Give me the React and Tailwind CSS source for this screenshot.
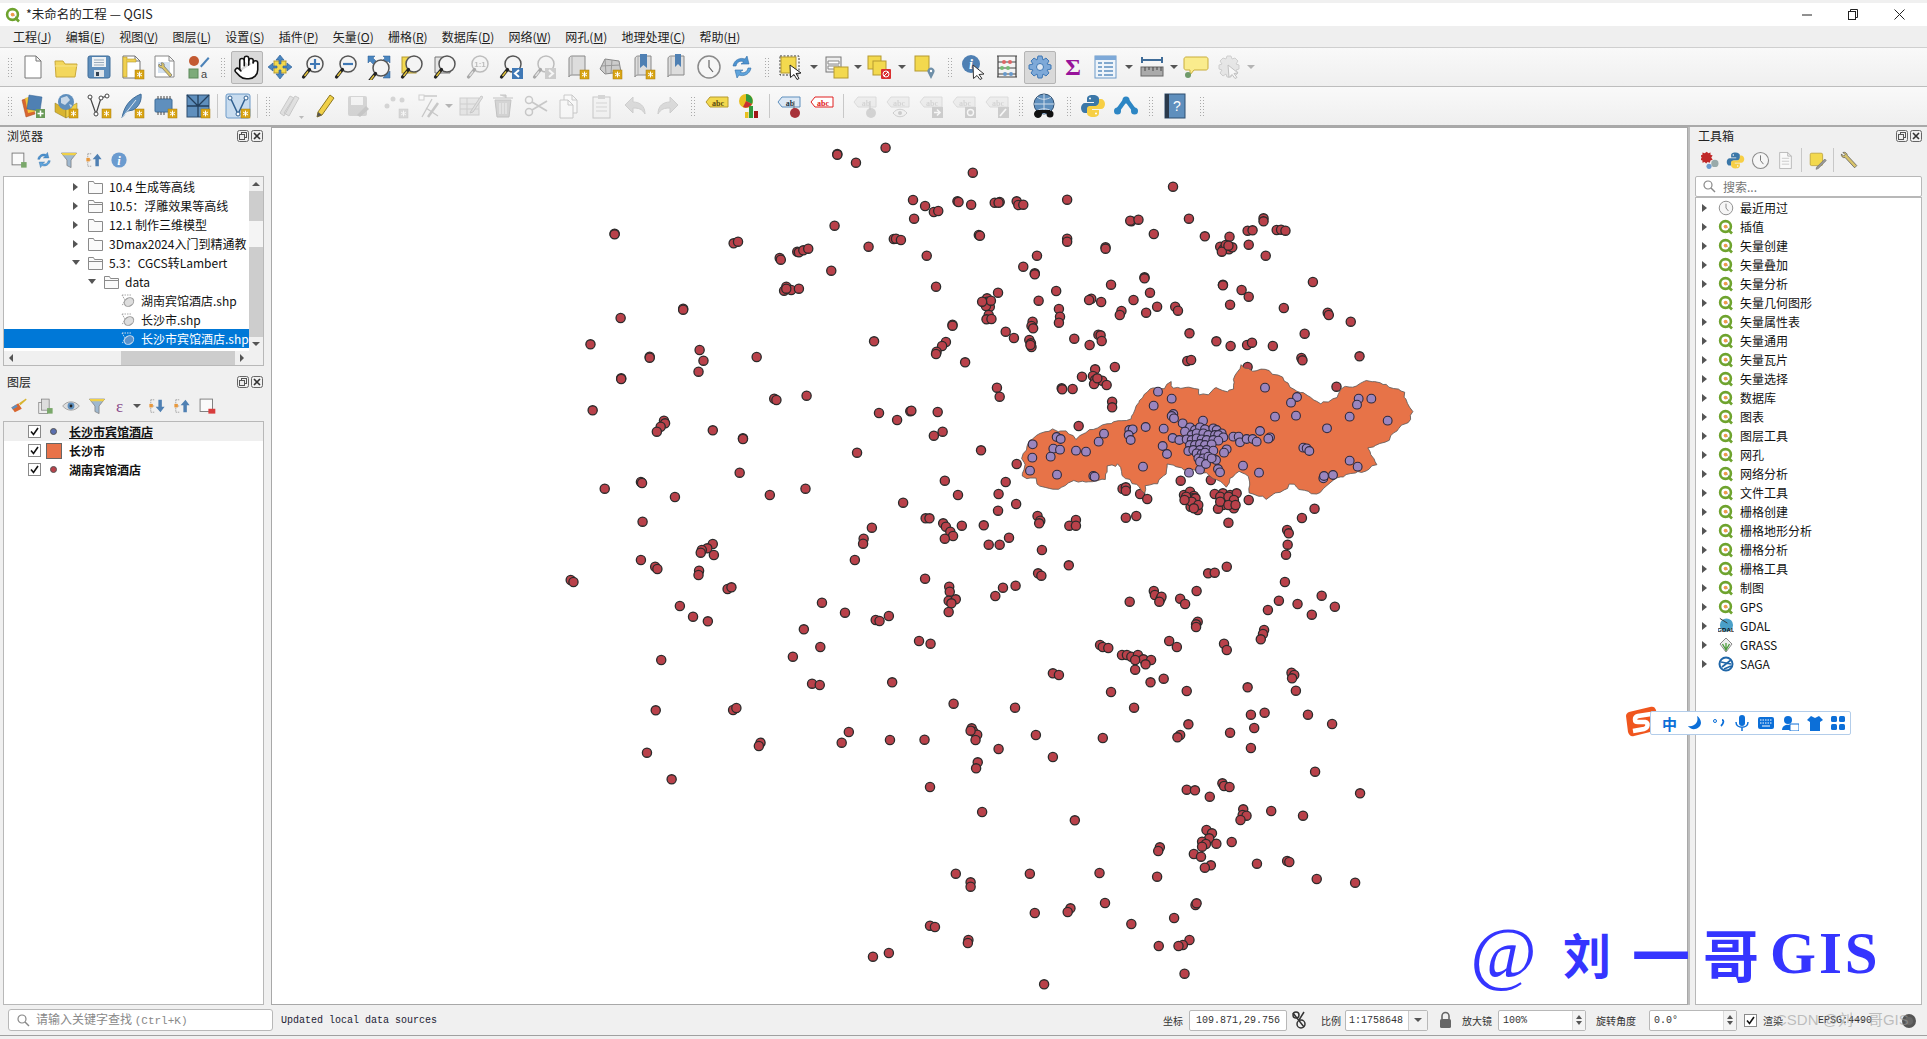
import React from "react";
import { Hand } from "lucide-react";

const Sv = ({ children, s = 26 }) => (
  <svg width={s} height={s} viewBox="0 0 26 26" fill="none" className="block">{children}</svg>
);
const Badge = () => (
  <g>
    <rect x="16" y="16" width="9" height="9" fill="#d9a514" stroke="#a87d10" strokeWidth=".5" />
    <path d="M20.5 17.6v5.8M18 19l5 3M23 19l-5 3" stroke="#fff" strokeWidth="1" />
  </g>
);
const Mag = ({ children }) => (
  <>
    <circle cx="15" cy="10" r="8" fill="#f4f4f4" stroke="#555" strokeWidth="1.5" />
    {children}
    <path d="M9.5 15.5 3.5 23" stroke="#222" strokeWidth="3.2" strokeLinecap="round" />
    <path d="M8 17.5 4.5 22" stroke="#e8c83c" strokeWidth="1.4" />
  </>
);
const Doc = ({ x = 5, y = 2, w = 16, h = 22, f = "#fff", st = "#777" }) => (
  <path d={`M${x} ${y}h${w - 5}l5 5v${h - 5}h-${w}z M${x + w - 5} ${y}v5h5`} fill={f} stroke={st} strokeWidth="1" />
);
const Roll = ({ children }) => (
  <>
    <path d="M5 5c0-3 3-3 3-3h13v19H8c-2 0-3 1-3 2z" fill="#ddd" stroke="#888" />
    <path d="M8 2v19" stroke="#aaa" />
    {children}
  </>
);
const Tag = ({ f = "#ddd", st = "#aaa", t = "abc", c = "#999" }) => (
  <>
    <path d="M2 9l4-5h18v10H6z" fill={f} stroke={st} />
    <text x="14" y="12.5" fontSize="8" textAnchor="middle" fontWeight="700" fontFamily="Liberation Serif" fill={c}>{t}</text>
  </>
);
const Arrows = () => (
  <path d="M13 1l4 5h-3v4h-2V6H9zM13 25l4-5h-3v-4h-2v4H9zM1 13l5-4v3h4v2H6v3zM25 13l-5-4v3h-4v2h4v3z" fill="#4a86c0" stroke="#2a5a90" strokeWidth=".6" />
);
const Refresh = ({ s = 26 }) => (
  <Sv s={s}>
    <path d="M4 12C5 6 11 3 16 5l2-3 2 8-8 0 3-2c-4-2-7 0-8 4z" fill="#4d93d0" stroke="#2f6da8" strokeWidth=".6" />
    <path d="M22 14c-1 6-7 9-12 7l-2 3-2-8 8 0-3 2c4 2 7 0 8-4z" fill="#5fa4dc" stroke="#2f6da8" strokeWidth=".6" />
  </Sv>
);
const Clock = ({ s = 26 }) => (
  <Sv s={s}>
    <circle cx="13" cy="13" r="11" fill="#f6f6f6" stroke="#8a8a8a" strokeWidth="1.5" />
    <path d="M13 6v7l4 5" stroke="#666" strokeWidth="1.2" />
  </Sv>
);
const Python = ({ s = 26 }) => (
  <Sv s={s}>
    <path d="M13 2c-5 0-6 2-6 4v3h7v1H5c-2 0-4 2-4 5s2 5 4 5h2v-3c0-2 2-4 4-4h5c2 0 3-1 3-3V6c0-2-2-4-6-4z" fill="#3b77a8" />
    <path d="M13 24c5 0 6-2 6-4v-3h-7v-1h9c2 0 4-2 4-5s-2-5-4-5h-2v3c0 2-2 4-4 4h-5c-2 0-3 1-3 3v4c0 2 2 4 6 4z" fill="#f7cf45" />
    <circle cx="10" cy="5.5" r="1" fill="#fff" />
    <circle cx="16" cy="20.5" r="1" fill="#fff" />
  </Sv>
);
const Q = ({ s = 16 }) => (
  <svg width={s} height={s} viewBox="0 0 16 16" fill="none" className="block">
    <circle cx="7.5" cy="7.5" r="5.4" fill="#fff" stroke="#6ea32e" strokeWidth="2.6" />
    <circle cx="7.6" cy="7.6" r="1.9" fill="#ee9a4d" />
    <path d="M10 10.5l4 4" stroke="#6ea32e" strokeWidth="2.6" />
    <path d="M9 8l2 2" stroke="#bbb" strokeWidth="1" />
  </svg>
);

const Btn = ({ children, active, dim, w = "w-[33px]" }) => (
  <div className={`${w} h-[33px] shrink-0 flex items-center justify-center`}>
    <div className={`${active ? "w-[32px] h-[33px] bg-[#d9d9d9] border border-[#b5b5b5] rounded-[2px]" : ""} flex items-center justify-center ${dim ? "opacity-35 grayscale" : ""}`}>
      {children}
    </div>
  </div>
);
const Dots = ({ w = "w-[16px]" }) => (
  <div className={`${w} shrink-0 flex justify-center`}>
    <div className="w-[5px] h-[21px] bg-[radial-gradient(circle,#aaa_0.6px,transparent_0.9px)] bg-[length:3px_3px]" />
  </div>
);
const Sep = ({ w = "w-[7px]" }) => (
  <div className={`${w} shrink-0 flex justify-center`}><div className="w-px h-[24px] bg-[#c8c8c8]" /></div>
);
const Caret = ({ w = "w-[12px]", dim }) => (
  <div className={`${w} shrink-0 flex justify-center ${dim ? "opacity-40" : ""}`}>
    <div className="w-0 h-0 border-x-[4px] border-x-transparent border-t-[4px] border-t-[#555]" />
  </div>
);

const TB1 = () => (
  <div className="h-[39px] shrink-0 flex items-center pl-[3px] bg-gradient-to-b from-[#f9f9f9] to-[#efefef] border-b border-[#bdbdbd]">
    <Dots w="w-[13px]" />
    <Btn><Sv><Doc x={5} y={2} w={16} h={22} /></Sv></Btn>
    <Btn><Sv><path d="M2 7h8l2 3h12l-2 13H3z" fill="#f3d75c" stroke="#c9a83a" /><path d="M2 12h22" stroke="#f8e48a" /></Sv></Btn>
    <Btn><Sv><rect x="2" y="2" width="22" height="22" rx="2" fill="#5f8fbd" stroke="#3f6c98" /><rect x="6" y="3" width="14" height="10" fill="#eef2f5" /><path d="M8 6h10M8 8.5h10M8 11h10" stroke="#9ab" /><rect x="8" y="16" width="10" height="7" fill="#dfe5ea" /><rect x="10" y="18" width="3" height="4" fill="#345" /></Sv></Btn>
    <Btn><Sv><Doc x={4} y={2} w={17} h={22} /><rect x="4" y="3" width="4" height="20" fill="#f0d050" stroke="#b59a30" strokeWidth=".6" /><path d="M8 5h9v3H8" fill="#f0d050" stroke="#b59a30" strokeWidth=".6" /><Badge /></Sv></Btn>
    <Btn><Sv><Doc x={3} y={2} w={19} h={21} st="#888" /><rect x="6" y="8" width="12" height="11" fill="#d5e2f0" /><path d="M9 9c2-1 4 1 3 3l8 9-2 2-8-9c-3 0-4-2-3-4l2 2 1-1z" fill="#d8c36a" stroke="#6b6b6b" strokeWidth=".7" /></Sv></Btn>
    <Btn><Sv><circle cx="9" cy="7" r="5" fill="#c35a32" /><path d="M15 12l8-9 1.5 1.500-8 9z" fill="#4b82b8" /><rect x="4" y="15" width="9" height="9" fill="#7dab7a" stroke="#5d8a5a" /><text x="16" y="24" fontSize="11" fill="#444" fontFamily="Liberation Sans">a</text></Sv></Btn>
    <Dots />
    <Btn active><Hand size={27} fill="#fff" stroke="#111" strokeWidth={1.4} /></Btn>
    <Btn><Sv><rect x="7" y="7" width="12" height="12" fill="#f3d94e" stroke="#b59a30" /><Arrows /></Sv></Btn>
    <Btn><Sv><Mag><path d="M10 10h10M15 5v10" stroke="#3f78b5" strokeWidth="2.2" /></Mag></Sv></Btn>
    <Btn><Sv><Mag><path d="M10 10h10" stroke="#3f78b5" strokeWidth="2.2" /></Mag></Sv></Btn>
    <Btn><Sv><path d="M2 2h7L7 4l4 4-3 3-4-4-2 2zM24 2v7l-2-2-4 4-3-3 4-4-2-2zM24 24h-7l2-2-4-4 3-3 4 4 2-2z" fill="#4a86c0" stroke="#2a5a90" strokeWidth=".5" /><g transform="translate(0 4)"><Mag /></g></Sv></Btn>
    <Btn><Sv><rect x="3" y="3" width="14" height="16" fill="#f3d94e" stroke="#b59a30" /><Mag /></Sv></Btn>
    <Btn><Sv><Doc x={3} y={3} w={15} h={16} f="#e6e6e6" /><Mag /></Sv></Btn>
    <Btn dim><Sv><Mag><text x="15" y="13" fontSize="8" textAnchor="middle" fontWeight="700" fill="#555" fontFamily="Liberation Sans">1:1</text></Mag></Sv></Btn>
    <Btn><Sv><Mag /><rect x="14" y="14" width="11" height="11" fill="#3f78b5" /><path d="M21 16l-4 3.5 4 3.5" stroke="#fff" strokeWidth="2" /></Sv></Btn>
    <Btn dim><Sv><Mag /><rect x="14" y="14" width="11" height="11" fill="#888" /><path d="M18 16l4 3.5-4 3.5" stroke="#fff" strokeWidth="2" /></Sv></Btn>
    <Btn><Sv><Roll /><Badge /></Sv></Btn>
    <Btn><Sv><path d="M3 15l5-10 14 2 2 11-16 2z" fill="#ccc" stroke="#888" /><path d="M8 5l1 15M15 6l-1 13M4 12l19-1" stroke="#999" /><Badge /></Sv></Btn>
    <Btn><Sv><Roll><path d="M10 0h7v14l-3.500-3-3.500 3z" fill="#4f80b3" /></Roll><Badge /></Sv></Btn>
    <Btn><Sv><Roll><path d="M12 0h6v13l-3-3-3 3z" fill="#4f80b3" /></Roll></Sv></Btn>
    <Btn><Clock /></Btn>
    <Btn><Refresh /></Btn>
    <Dots />
    <Btn><Sv><rect x="2" y="2" width="19" height="19" stroke="#333" strokeDasharray="2 1.500" /><rect x="3" y="3" width="15" height="16" fill="#f3d94e" stroke="#b59a30" /><path d="M12 11l11 8-5 .5 3 5-2 1-3-5-3.500 3z" fill="#fff" stroke="#222" /></Sv></Btn>
    <Caret w="w-[13px]" />
    <Btn><Sv><rect x="2" y="3" width="15" height="15" fill="#eee" stroke="#777" /><path d="M4 7h11v3H4zM4 12h11v3H4z" fill="#fff" stroke="#888" /><rect x="10" y="13" width="14" height="11" fill="#f3d94e" stroke="#b59a30" /></Sv></Btn>
    <Caret w="w-[10px]" />
    <Btn><Sv><rect x="1" y="2" width="13" height="13" fill="#f3d94e" stroke="#b59a30" /><rect x="6" y="7" width="13" height="14" fill="#f3d94e" stroke="#b59a30" /><rect x="14" y="15" width="10" height="10" fill="#d93030" rx="1" /><circle cx="19" cy="20" r="3" stroke="#fff" /><path d="M17 22l4-4" stroke="#fff" /></Sv></Btn>
    <Caret />
    <Btn><Sv><rect x="3" y="2" width="14" height="15" fill="#f3d94e" stroke="#b59a30" /><path d="M19 25l-3-6a3.500 3.500 0 1 1 6 0z" fill="#6f8fa8" /><circle cx="19" cy="17" r="1.200" fill="#fff" /></Sv></Btn>
    <Dots />
    <Btn><Sv><circle cx="10" cy="10" r="9" fill="#4f80b3" /><text x="10" y="15" fontSize="14" fontWeight="700" fontStyle="italic" textAnchor="middle" fill="#fff" fontFamily="Liberation Serif">i</text><path d="M12 11l11 9-5 .5 3 4-2 1-3-4-3.500 3z" fill="#fff" stroke="#333" /></Sv></Btn>
    <Btn><Sv><path d="M3 2h20M3 23h20M4 2v21M22 2v21M4 8h18M4 14h18M4 20h18" stroke="#444" strokeWidth="1.200" /><circle cx="10" cy="8" r="2" fill="#d66" /><circle cx="16" cy="8" r="2" fill="#d66" /><circle cx="8" cy="14" r="2" fill="#7b7" /><circle cx="14" cy="14" r="2" fill="#7b7" /><circle cx="11" cy="20" r="2" fill="#69c" /><circle cx="17" cy="20" r="2" fill="#69c" /></Sv></Btn>
    <Btn active><Sv><path d="M11 2h4l1 4 3-2 3 3-2 3 4 1v4l-4 1 2 3-3 3-3-2-1 4h-4l-1-4-3 2-3-3 2-3-4-1v-4l4-1-2-3 3-3 3 2z" fill="#7ea9d8" stroke="#3f78b5" /><circle cx="13" cy="13" r="3.500" fill="#dfe8f2" stroke="#3f78b5" /></Sv></Btn>
    <Btn><Sv><text x="13" y="21" fontSize="24" fontWeight="700" textAnchor="middle" fill="#98139b" fontFamily="Liberation Serif">Σ</text></Sv></Btn>
    <Btn><Sv><rect x="2" y="2" width="21" height="22" fill="#eef4fa" stroke="#6d9ac8" /><rect x="2" y="2" width="21" height="4" fill="#7ea9d8" /><path d="M5 9h4M11 9h9M5 13h4M11 13h9M5 17h4M11 17h9M5 21h4M11 21h9" stroke="#5d8ec0" strokeWidth="1.300" /></Sv></Btn>
    <Caret w="w-[13px]" />
    <Btn><Sv><path d="M3 6h20M3 3v6M23 3v6" stroke="#3f6c98" strokeWidth="2" /><rect x="2" y="13" width="22" height="9" fill="#aaa" stroke="#666" /><path d="M6 13v4M10 13v3M14 13v4M18 13v3M22 13v4" stroke="#444" /></Sv></Btn>
    <Caret w="w-[11px]" />
    <Btn><Sv><path d="M3 3h20c1 0 2 1 2 2v9c0 1-1 2-2 2H11l-4 5v-5H3c-1 0-2-1-2-2V5c0-1 1-2 2-2z" fill="#faec8d" stroke="#c9ad3a" /><circle cx="5" cy="21" r="3" fill="#6f9a6a" /></Sv></Btn>
    <Btn dim><Sv><path d="M11 2h4l1 3 3-1 3 3-2 3 3 1v4l-3 1 2 3-3 3-3-2-1 3h-4l-1-3-3 2-3-3 2-3-3-1v-4l3-1-2-3 3-3 3 1z" fill="#ccc" stroke="#888" /><path d="M12 11l10 8-4 .5 3 4-2 1-3-4-3 3z" fill="#fff" stroke="#666" /></Sv></Btn>
    <Caret dim />
  </div>
);

const TB2 = () => (
  <div className="h-[40px] shrink-0 flex items-center pl-[3px] bg-gradient-to-b from-[#f9f9f9] to-[#efefef] border-b-2 border-[#a9a9a9]">
    <Dots w="w-[13px]" />
    <Btn><Sv><path d="M2 7l9-3 4 17-9 3z" fill="#d8662f" stroke="#a84a20" strokeWidth=".5" /><path d="M5 5l9-2 3 15-9 2z" fill="#f0c53c" /><path d="M9 2l13 2-2 14-13-2z" fill="#4f80b3" stroke="#2f5f90" strokeWidth=".5" /><rect x="16" y="16" width="9" height="9" fill="#6a9a58" /><path d="M20.500 17.500v6M17.500 20.500h6" stroke="#fff" strokeWidth="1.500" /></Sv></Btn>
    <Btn><Sv><path d="M2 10l11 6v9L2 19z" fill="#d8b430" stroke="#8f7820" strokeWidth=".5" /><path d="M13 16l11-6v9l-11 6z" fill="#f0d048" stroke="#8f7820" strokeWidth=".5" /><circle cx="13" cy="9" r="8" fill="#5f8fbd" /><path d="M8 5l6-2 3 4-5 5-4-2zM16 11l3 1-1 3z" fill="#c8d8e8" /><Badge /></Sv></Btn>
    <Btn><Sv><path d="M4 4l6 17L15 5l6-2" stroke="#444" strokeWidth="1.200" /><circle cx="4" cy="4" r="2" fill="#fff" stroke="#444" /><circle cx="15" cy="5" r="2" fill="#fff" stroke="#444" /><circle cx="21" cy="3" r="2" fill="#fff" stroke="#444" /><circle cx="10" cy="21" r="2" fill="#fff" stroke="#444" /><Badge /></Sv></Btn>
    <Btn><Sv><path d="M3 25C5 14 10 6 22 1c1 6-2 13-8 16l-5 1-3 3z" fill="#5f8fbd" stroke="#3f6c98" /><path d="M3 25L17 7" stroke="#dce6f0" /><Badge /></Sv></Btn>
    <Btn><Sv><rect x="3" y="6" width="17" height="13" rx="1" fill="#5f8fbd" stroke="#3f6c98" /><path d="M6 6V3M9 6V3M12 6V3M15 6V3M18 6V3M6 22v-3M9 22v-3M12 22v-3" stroke="#444" /><Badge /></Sv></Btn>
    <Btn><Sv><rect x="2" y="2" width="22" height="22" fill="#5f8fbd" stroke="#2f4f70" /><path d="M2 13h22M13 2v22M2 2l11 11M24 2L13 13" stroke="#233f5c" strokeWidth="1.300" /><Badge /></Sv></Btn>
    <Sep />
    <Btn><Sv><rect x="1" y="1" width="24" height="24" rx="2" fill="#c8dcef" stroke="#6d9ac8" /><path d="M5 4l8 17 8-17" stroke="#2f5f90" strokeWidth="1.500" /><circle cx="5" cy="5" r="2" fill="#fff" stroke="#2f5f90" /><circle cx="21" cy="5" r="2" fill="#fff" stroke="#2f5f90" /><circle cx="13" cy="21" r="2" fill="#fff" stroke="#2f5f90" /><Badge /></Sv></Btn>
    <Sep w="w-[6px]" />
    <Dots w="w-[15px]" />
    <Btn dim><Sv><path d="M5 20L16 3l4 2-10 18zM1 20L11 3l4 2L5 23z" fill="#bbb" stroke="#777" /><path d="M20 23h5l-2.500 3z" fill="#555" /></Sv></Btn>
    <Btn><Sv><path d="M6 19L18 2l4 3-12 17-5 2z" fill="#f0d048" stroke="#8f7820" /><path d="M6 19l4 3-5 2z" fill="#555" /></Sv></Btn>
    <Btn dim><Sv><rect x="3" y="3" width="19" height="20" rx="2" fill="#999" /><rect x="6" y="4" width="12" height="8" fill="#eee" /><path d="M12 22l9-9 3 3-9 8z" fill="#777" /></Sv></Btn>
    <div className="w-[5px] shrink-0" />
    <Btn dim><Sv><circle cx="4" cy="13" r="2.500" fill="#999" /><circle cx="10" cy="6" r="2.500" fill="#999" /><circle cx="19" cy="7" r="2.500" fill="#999" /><Badge /></Sv></Btn>
    <Btn dim><Sv><path d="M5 3h16M6 24L16 6M10 15l12 8" stroke="#777" strokeWidth="1.300" /><rect x="3" y="2" width="5" height="5" fill="#fff" stroke="#888" /><path d="M12 24l10-14" stroke="#777" strokeWidth="2.500" /></Sv></Btn>
    <Caret w="w-[8px]" dim />
    <Btn dim><Sv><rect x="3" y="5" width="19" height="17" fill="#ccc" stroke="#888" /><path d="M3 11h19M3 16h19M10 5v17" stroke="#888" /><path d="M14 18L24 3l2 1-10 15-3 1z" fill="#bbb" stroke="#777" /></Sv></Btn>
    <Btn dim><Sv><path d="M5 7h16l-2 17H7zM3 5h20M10 2h6v3" fill="#999" stroke="#666" /><path d="M10 10v11M13 10v11M16 10v11" stroke="#eee" /></Sv></Btn>
    <Btn dim><Sv><circle cx="6" cy="7" r="3.500" stroke="#777" strokeWidth="1.500" /><circle cx="6" cy="19" r="3.500" stroke="#777" strokeWidth="1.500" /><path d="M9 9l15 9M9 17L24 8" stroke="#777" strokeWidth="1.800" /></Sv></Btn>
    <Btn dim><Sv><Doc x={8} y={2} w={13} h={18} /><Doc x={4} y={7} w={13} h={18} /></Sv></Btn>
    <Btn dim><Sv><rect x="4" y="4" width="17" height="21" fill="#eee" stroke="#777" /><rect x="9" y="2" width="7" height="4" fill="#999" /><path d="M7 10h11M7 14h11M7 18h11" stroke="#999" /></Sv></Btn>
    <Btn dim><Sv><path d="M3 12l8-8v5c7 0 12 4 12 12-3-5-6-6-12-6v5z" fill="#aaa" stroke="#888" /></Sv></Btn>
    <Btn dim><Sv><path d="M23 12l-8-8v5C8 9 3 13 3 21c3-5 6-6 12-6v5z" fill="#aaa" stroke="#888" /></Sv></Btn>
    <Dots />
    <Btn><Sv><Tag f="#f3d94e" st="#b59a30" t="abc" c="#5a4a10" /></Sv></Btn>
    <Btn><Sv><circle cx="9" cy="8" r="7" fill="#e8c020" /><path d="M9 8V1a7 7 0 0 1 6 10z" fill="#2f9a3f" /><path d="M9 8l6 3a7 7 0 0 1-9 3z" fill="#c83030" /><rect x="12" y="13" width="4" height="12" fill="#2f9a3f" /><rect x="17" y="18" width="4" height="7" fill="#a01818" /><rect x="8" y="19" width="3.500" height="6" fill="#e8c020" /></Sv></Btn>
    <Sep w="w-[6px]" />
    <Btn><Sv><Tag f="#dce8f5" st="#5f8fbd" t="ab" c="#234" /><path d="M18 8v9" stroke="#777" /><circle cx="19" cy="20" r="5" fill="#a8323a" /></Sv></Btn>
    <Btn><Sv><Tag f="#fff" st="#e02020" t="abc" c="#e02020" /></Sv></Btn>
    <Sep w="w-[10px]" />
    <Btn dim><Sv><Tag t="ab" /><circle cx="19" cy="20" r="5" fill="#999" /><path d="M18 8v9" stroke="#777" /></Sv></Btn>
    <Btn dim><Sv><Tag /><path d="M8 20c4-5 10-5 14 0-4 5-10 5-14 0z" fill="#eee" stroke="#888" /><circle cx="15" cy="20" r="2" fill="#888" /></Sv></Btn>
    <Btn dim><Sv><Tag /><rect x="14" y="14" width="11" height="11" fill="#888" /><path d="M16 19.500h5M19 16.500l3 3-3 3" stroke="#fff" strokeWidth="1.600" /></Sv></Btn>
    <Btn dim><Sv><Tag /><rect x="14" y="14" width="11" height="11" fill="#888" /><circle cx="19.500" cy="19.500" r="3" stroke="#fff" strokeWidth="1.400" /></Sv></Btn>
    <Btn dim><Sv><Tag /><rect x="14" y="14" width="11" height="11" fill="#888" /><path d="M16 23l6-7" stroke="#fff" strokeWidth="1.800" /></Sv></Btn>
    <Dots w="w-[14px]" />
    <Btn><Sv><circle cx="13" cy="11" r="10" fill="#5f8fbd" stroke="#2f4f70" /><path d="M3 11h20M13 1v20M6 4c4 3 10 3 14 0M6 18c4-3 10-3 14 0" stroke="#cfdcea" /><circle cx="7" cy="21" r="3.500" fill="#111" stroke="#111" /><circle cx="19" cy="21" r="3.500" fill="#111" /><path d="M7 17h12v3H7z" fill="#111" /></Sv></Btn>
    <Dots />
    <Btn><Python /></Btn>
    <Btn><Sv><path d="M13 6L5 17" stroke="#2d86c4" strokeWidth="4.500" /><path d="M13 6l8 11" stroke="#2d86c4" strokeWidth="4.500" /><circle cx="4.500" cy="18" r="3.500" fill="#2d86c4" /><circle cx="21.500" cy="18" r="3.500" fill="#2d86c4" /><circle cx="13" cy="7" r="3.500" fill="#2d86c4" /></Sv></Btn>
    <Dots />
    <Btn><Sv><rect x="3" y="1" width="20" height="24" fill="#5f8fbd" stroke="#2f4f70" /><rect x="3" y="1" width="4" height="24" fill="#2a3a4c" /><text x="15" y="18" fontSize="14" textAnchor="middle" fill="#fff" fontFamily="Liberation Sans">?</text></Sv></Btn>
    <Dots w="w-[20px]" />
  </div>
);

const menus = [["工程", "J"], ["编辑", "E"], ["视图", "V"], ["图层", "L"], ["设置", "S"], ["插件", "P"], ["矢量", "O"], ["栅格", "R"], ["数据库", "D"], ["网络", "W"], ["网孔", "M"], ["地理处理", "C"], ["帮助", "H"]];

const DockBtns = () => (
  <div className="flex gap-[2px] items-center">
    <svg width="12" height="12" viewBox="0 0 12 12" fill="none"><rect x=".5" y=".5" width="11" height="11" rx="2" stroke="#666" /><rect x="4.500" y="2.500" width="5" height="5" stroke="#555" /><rect x="2.500" y="4.500" width="5" height="5" fill="#eee" stroke="#555" /></svg>
    <svg width="12" height="12" viewBox="0 0 12 12" fill="none"><rect x=".5" y=".5" width="11" height="11" rx="2" stroke="#666" /><path d="M3 3l6 6M9 3l-6 6" stroke="#333" strokeWidth="1.600" /></svg>
  </div>
);
const Tri = ({ open, c = "#555" }) => open
  ? <div className="w-0 h-0 border-x-[4px] border-x-transparent border-t-[5px]" style={{ borderTopColor: c }} />
  : <div className="w-0 h-0 border-y-[4px] border-y-transparent border-l-[5px]" style={{ borderLeftColor: c }} />;
const Folder = ({ open }) => (
  <svg width="15" height="14" viewBox="0 0 15 14" fill="none"><path d="M.5 1.500h5l1 2h8v10H.5z" fill="#fafafa" stroke="#8a8a8a" />{open && <path d="M.5 5.500h14" stroke="#8a8a8a" />}</svg>
);
const Shp = ({ sel }) => (
  <svg width="15" height="15" viewBox="0 0 15 15" fill="none"><path d="M2 2l3 5-3 6" stroke={sel ? "#cde" : "#999"} strokeDasharray="1.500 1" /><ellipse cx="9" cy="9" rx="5" ry="4" transform="rotate(-35 9 9)" fill={sel ? "#5a93cc" : "#ddd"} stroke={sel ? "#cde" : "#999"} /><path d="M2 2h9" stroke={sel ? "#cde" : "#aaa"} strokeDasharray="1.500 1" /></svg>
);

const Row = ({ ind, arrow, icon, text, sel }) => (
  <div className={`h-[19px] flex items-center relative whitespace-nowrap overflow-hidden ${sel ? "bg-[#0078d7] text-white" : "text-[#111]"}`}>
    <div className="shrink-0" style={{ width: ind }} />
    <div className="w-[13px] shrink-0 flex justify-center">{arrow && <Tri open={arrow === "open"} />}</div>
    <div className="w-[16px] ml-[5px] shrink-0 flex justify-center">{icon}</div>
    <span className="pl-[6px]">{text}</span>
  </div>
);

const BrowserPanel = () => (
  <div className="h-[241px] shrink-0 flex flex-col">
    <div className="h-[17px] shrink-0 flex items-center justify-between pl-[4px] pr-[1px] text-[12px] text-[#222]"><span>浏览器</span><DockBtns /></div>
    <div className="h-[32px] shrink-0 flex items-center gap-[7px] pl-[7px]">
      <Sv s={18}><rect x="3" y="3" width="17" height="17" fill="#fafafa" stroke="#777" strokeWidth="1.300" /><rect x="16" y="16" width="8" height="8" fill="#7aa86a" /></Sv>
      <Refresh s={18} />
      <Sv s={18}><path d="M2 3h22l-8 10v11l-6-3v-8z" fill="#9fb8cf" stroke="#777" /><path d="M2 3h22l-2 3H4z" fill="#f0d048" /></Sv>
      <Sv s={18}><path d="M4 4h6M4 4v18h6M4 13h6" stroke="#888" strokeDasharray="2 1" /><rect x="2" y="10" width="5" height="5" fill="#e8983c" /><path d="M18 4l6 8h-4v10h-5V12h-4z" fill="#4f80b3" /></Sv>
      <Sv s={18}><circle cx="13" cy="13" r="11" fill="#6b9bcf" /><text x="13" y="20" fontSize="18" fontWeight="700" fontStyle="italic" textAnchor="middle" fill="#fff" fontFamily="Liberation Serif">i</text></Sv>
    </div>
    <div className="h-[190px] shrink-0 border border-[#b8b8b8] bg-white flex flex-col">
      <div className="flex-1 flex min-h-0">
        <div className="flex-1 min-w-0 text-[12px] leading-[19px] overflow-hidden">
          <Row ind={65} arrow="closed" icon={<Folder />} text="10.4 生成等高线" />
          <Row ind={65} arrow="closed" icon={<Folder open />} text="10.5：浮雕效果等高线" />
          <Row ind={65} arrow="closed" icon={<Folder />} text="12.1 制作三维模型" />
          <Row ind={65} arrow="closed" icon={<Folder />} text="3Dmax2024入门到精通教" />
          <Row ind={65} arrow="open" icon={<Folder open />} text="5.3：CGCS转Lambert" />
          <Row ind={81} arrow="open" icon={<Folder open />} text="data" />
          <Row ind={97} icon={<Shp />} text="湖南宾馆酒店.shp" />
          <Row ind={97} icon={<Shp />} text="长沙市.shp" />
          <Row ind={97} icon={<Shp sel />} text="长沙市宾馆酒店.shp" sel />
        </div>
        <div className="w-[14px] shrink-0 bg-[#f0f0f0] flex flex-col">
          <div className="h-[14px] flex items-center justify-center"><div className="w-0 h-0 border-x-[4px] border-x-transparent border-b-[4px] border-b-[#555]" /></div>
          <div className="h-[30px] bg-[#cdcdcd]" />
          <div className="h-[26px] bg-[#f4f4f4]" />
          <div className="flex-1 bg-[#cdcdcd]" />
          <div className="h-[14px] flex items-center justify-center"><div className="w-0 h-0 border-x-[4px] border-x-transparent border-t-[4px] border-t-[#555]" /></div>
        </div>
      </div>
      <div className="h-[14px] shrink-0 flex bg-[#f0f0f0]">
        <div className="w-[14px] flex items-center justify-center"><div className="w-0 h-0 border-y-[4px] border-y-transparent border-r-[4px] border-r-[#555]" /></div>
        <div className="w-[103px]" />
        <div className="w-[114px] bg-[#cdcdcd]" />
        <div className="w-[14px] flex items-center justify-center"><div className="w-0 h-0 border-y-[4px] border-y-transparent border-l-[4px] border-l-[#555]" /></div>
      </div>
    </div>
  </div>
);

const Check = () => (
  <div className="w-[13px] h-[13px] border border-[#8a8a8a] bg-white flex items-center justify-center">
    <svg width="9" height="9" viewBox="0 0 9 9" fill="none"><path d="M1 4.500l2.500 3L8 1" stroke="#111" strokeWidth="1.600" /></svg>
  </div>
);
const LayerRow = ({ sym, text, first }) => (
  <div className={`h-[19px] flex items-center ${first ? "bg-[#efefef]" : ""}`}>
    <div className="w-[24px] shrink-0" />
    <Check />
    <div className="w-[19px] shrink-0 ml-[3px] flex justify-center">{sym}</div>
    <span className={`ml-[6px] text-[12px] font-bold text-[#111] ${first ? "underline" : ""}`}>{text}</span>
  </div>
);
const dot = (c) => <div className="w-[7px] h-[7px] rounded-full border border-[#555]" style={{ backgroundColor: c }} />;

const LayersPanel = () => (
  <div className="flex-1 flex flex-col min-h-0">
    <div className="h-[19px] mt-[4px] shrink-0 flex items-center justify-between pl-[4px] pr-[1px] text-[12px] text-[#222]"><span>图层</span><DockBtns /></div>
    <div className="h-[30px] shrink-0 flex items-center pl-[3px]">
      <div className="w-[26px] flex justify-center"><Sv s={18}><path d="M2 15l10-6 5 8-10 5z" fill="#d8662f" /><path d="M2 15l7-4 2 3-7 4z" fill="#5f8fbd" /><path d="M13 9l10-7 1 2-9 8z" fill="#d8b430" /></Sv></div>
      <div className="w-[26px] flex justify-center"><Sv s={18}><rect x="4" y="8" width="13" height="16" fill="#eee" stroke="#777" /><rect x="8" y="3" width="11" height="16" fill="#ddd" stroke="#777" /><rect x="16" y="16" width="8" height="8" fill="#7aa86a" /></Sv></div>
      <div className="w-[26px] flex justify-center"><Sv s={18}><path d="M1 13c6-8 18-8 24 0-6 8-18 8-24 0z" fill="#ddd" stroke="#888" /><circle cx="13" cy="13" r="5" fill="#5f8fbd" /><circle cx="13" cy="13" r="2" fill="#222" /></Sv></div>
      <div className="w-[25px] flex justify-center"><Sv s={18}><path d="M2 3h22l-8 10v11l-6-3v-8z" fill="#9fb8cf" stroke="#777" /><path d="M2 3h22l-2 3H4z" fill="#f0d048" /></Sv></div>
      <div className="w-[21px] flex justify-center text-[17px] leading-none text-[#8a4a8a] font-['Liberation_Serif']">ε</div>
      <Caret w="w-[14px]" />
      <div className="w-[25px] flex justify-center"><Sv s={18}><path d="M4 4h6M4 4v18h6M4 13h6" stroke="#888" strokeDasharray="2 1" /><rect x="2" y="10" width="5" height="5" fill="#e8983c" /><path d="M18 22l6-8h-4V4h-5v10h-4z" fill="#4f80b3" /></Sv></div>
      <div className="w-[25px] flex justify-center"><Sv s={18}><path d="M4 4h6M4 4v18h6M4 13h6" stroke="#888" strokeDasharray="2 1" /><rect x="2" y="10" width="5" height="5" fill="#e8983c" /><path d="M18 4l6 8h-4v10h-5V12h-4z" fill="#4f80b3" /></Sv></div>
      <div className="w-[25px] flex justify-center"><Sv s={18}><rect x="3" y="3" width="18" height="18" fill="#fafafa" stroke="#777" strokeWidth="1.300" /><rect x="15" y="17" width="10" height="7" fill="#d83c3c" /></Sv></div>
    </div>
    <div className="flex-1 border border-[#b8b8b8] bg-white">
      <LayerRow first sym={dot("#5a6fb0")} text="长沙市宾馆酒店" />
      <LayerRow sym={<div className="w-[16px] h-[16px] bg-[#e87249] border border-[#666]" />} text="长沙市" />
      <LayerRow sym={dot("#b9414a")} text="湖南宾馆酒店" />
    </div>
  </div>
);

const RED_T = [542,72,542,74,576,98,630,53,789,128,1154,170,680,210,702,228,718,246,726,243,761,214,763,216,786,224,829,218,838,216,836,218,869,214,872,225,881,224,961,209,682,266,1078,274,1076,272,1091,269,1183,266,1319,265,1319,274,1290,302,1299,301,1343,300,1351,299,1359,302,1119,312,1212,319,136,311,136,313,353,340,361,335,437,384,439,389,469,365,472,367,480,361,489,356,537,287,599,350,645,327,649,326,658,330,800,315,802,317,705,377,961,326,961,335,1031,352,1031,356,1257,320,1240,350,1246,358,1256,358,1262,352,1250,345,1243,365,1255,347,1292,344,1323,377,906,377,881,410,902,430,902,433,531,422,1102,442,1102,445,1245,464,1245,466,1409,456,722,470,449,470,445,482,458,480,472,476,449,476,835,488,941,483,1041,464,1112,488,1279,480,1292,500,815,505,815,515,810,518,818,520,820,530,813,528,822,512,806,515,909,512,1005,506,1001,510,1023,516,1082,510,1125,530,1158,530,1163,542,1258,524,1356,534,261,536,261,539,147,564,946,537,1060,543,1057,555,1105,548,1436,548,1438,555,948,560,946,578,1478,575,818,555,814,568,823,567,752,584,752,587,898,575,896,588,899,595,849,605,864,624,1184,610,1394,611,1018,614,1022,616,974,626,1024,633,892,630,895,640,896,651,894,645,609,634,740,636,733,648,1002,645,1233,634,1259,648,1289,645,1298,638,1336,648,92,643,723,665,722,672,291,660,200,680,200,683,395,681,298,692,775,697,1180,693,1187,690,1388,684,1390,691,1494,679,289,725,1290,711,1048,711,1012,718,988,740,1008,738,1012,750,1025,752,1033,765,1010,762,1016,745,148,745,148,747,951,775,952,778,971,777,833,773,838,800,427,806,431,810,486,797,96,841,1043,815,1043,832,1452,770,618,849,675,844,677,842,725,846,651,870,226,872,228,880,220,890,213,905,315,901,982,888,734,905,718,917,370,925,370,927,578,968,804,961,869,1002,364,1028,184,1056,186,1059,738,1052,849,1056,118,1076,484,1076,419,1095,246,1101,762,1095,836,1092,1062,1076,1068,1072,1068,1082,1094,1092,1107,1107,1168,1052,1223,1050,1174,1095,1185,1085,1192,1098,1180,1110,1196,1120,1186,1130,1199,1140,1190,1105,1178,1100,1195,1105,1188,1115,1175,1110,1200,1125,1192,1135,1230,1092,1245,1090,1258,1095,1270,1090,1250,1110,1262,1120,1245,1125,1265,1135,1236,1136,1240,1100,1255,1100,1265,1110,1240,1115,1255,1125,1268,1125,1292,1110,662,1118,835,1142,868,1122,1412,1136,1389,1164,703,1165,710,1165,1087,1158,1068,1163,1255,1178,187,1175,907,1158,912,1172,910,1180,735,1180,740,1190,748,1205,769,1187,809,1186,977,1170,965,1187,977,1187,605,1193,1362,1200,1365,1210,753,1218,738,1226,590,1226,589,1241,855,1223,818,1244,838,1244,915,1260,1363,1244,1360,1274,315,1242,305,1255,295,1260,293,1268,317,1275];
const RED_B = [184,0,574,0,290,32,289,45,210,20,214,27,56,60,61,66,702,56,342,87,349,82,746,80,747,95,1218,40,1230,38,1252,20,964,16,908,40,914,47,867,77,844,83,1358,66,1197,93,1119,93,1121,105,1131,118,1133,110,1129,125,1167,116,1176,132,1075,125,1425,107,1347,122,1381,132,1449,140,1327,150,1407,164,514,128,556,158,255,138,279,170,306,184,745,122,758,118,750,130,745,156,830,108,636,168,612,180,619,183,481,208,1199,185,1196,193,1196,201,1320,210,1318,222,1314,238,691,243,712,251,511,261,1147,243,1161,261,1247,251,1252,270,1021,255,1026,261,1036,264,461,290,221,300,1061,285,1070,285,1078,290,1090,285,1100,298,1114,300,1085,300,1104,313,1085,329,935,340,946,345,1137,356,1113,367,1179,393,1041,396,1290,382,1370,338,1375,345,1371,355,1378,392,642,367,496,371,510,375,754,431,866,443,1083,443,211,451,352,450,358,444,1296,464,1321,458,1400,464,1444,492,1182,493,1302,504,1258,518,563,516,787,505,790,515,797,524,794,540,785,512,904,525,1026,534,1167,525,1162,532,638,540,701,539,550,548,836,567,402,548,399,558,195,578,935,591,1296,564,798,607,795,625,1413,635,240,658,711,681,1244,670,1247,678,1257,681,1179,689,1194,691,1221,710,1495,700,1282,748,1281,765,1288,767,1277,780,1333,753,1391,767,806,756,975,781,1215,810,1225,820,1220,835,1207,845,1214,852,1233,851,1207,860,1261,846,1130,862,1127,873,1192,882,1205,890,1223,916,1212,923,1307,911,1362,903,1366,906,758,941,893,941,1020,939,1125,950,1416,957,1486,968,785,967,785,980,1195,1035,1197,1030,967,1045,962,1056,1030,1029,902,1059,1156,1074,1078,1092,711,1097,720,1101,781,1140,780,1149,1184,1140,1172,1155,1164,1158,1128,1158,636,1179,607,1190,1175,1241,919,1273];
const POLY = [65,325,80,300,88,272,120,252,160,240,195,245,230,265,270,240,320,222,390,208,405,180,430,130,460,115,495,113,513,95,520,112,595,115,600,138,625,132,650,113,680,128,700,120,705,75,725,45,760,65,795,55,820,70,845,80,870,110,900,125,960,160,1010,145,1030,110,1060,110,1100,92,1140,100,1170,110,1215,130,1215,150,1237,185,1225,215,1190,240,1165,270,1105,295,1130,345,1085,365,1020,380,990,400,950,435,900,420,880,400,830,430,800,445,750,430,748,380,720,365,690,385,680,410,620,370,590,362,555,360,520,345,505,340,495,370,470,400,438,405,435,430,410,405,368,375,355,345,325,350,318,388,280,395,220,395,160,420,120,410,105,388,65,380,75,345];
const PURPLE = [474,125,515,146,461,167,795,113,891,141,873,158,1076,146,1114,146,1071,164,825,200,888,197,1049,200,1163,212,981,235,520,192,515,198,522,205,548,220,609,212,437,231,491,236,312,251,296,275,98,283,170,261,182,267,780,243,388,240,398,238,386,255,392,270,810,262,805,266,518,264,538,270,700,260,716,260,720,277,740,267,758,267,770,275,488,288,501,312,160,296,180,299,228,302,258,305,97,323,152,320,910,293,920,295,928,303,1049,332,1073,350,429,350,729,347,90,362,171,374,280,378,284,380,600,359,654,357,660,367,567,368,777,368,970,385,972,378,999,375,570,232,585,240,600,232,615,238,640,235,650,240,665,250,555,245,575,255,590,250,610,250,625,255,645,255,655,255,670,262,560,268,575,270,590,265,605,268,620,270,640,270,655,272,570,285,585,285,600,282,615,285,635,283,680,298,565,303,580,300,600,300,620,300,640,302,672,308,590,310,605,312,615,308,595,325,610,325,625,320,648,330,600,335,618,342,635,325];

const OX = 272, OY = 128;
const pairs = (a, fx, fy) => { const r = []; for (let i = 0; i < a.length; i += 2) r.push([fx(a[i]), fy(a[i + 1])]); return r; };
const reds = [
  ...pairs(RED_T, (x) => 540 + x / 1.823 - OX, (y) => 130 + y / 3 - OY),
  ...pairs(RED_B, (x) => 540 + x / 1.823 - OX, (y) => 560 + y / 3 - OY),
];
const z4x = (x) => 1000 + x / 3 - OX, z4y = (y) => 350 + y / 3 - OY;
const purples = pairs(PURPLE, z4x, z4y);
const polyPts = (() => {
  const pts = pairs(POLY, z4x, z4y); const out = []; let seed = 7;
  const rnd = () => { seed = (seed * 9301 + 49297) % 233280; return seed / 233280 - 0.5; };
  pts.forEach((p, i) => {
    const q = pts[(i + 1) % pts.length];
    const d = Math.hypot(q[0] - p[0], q[1] - p[1]); const n = Math.max(1, Math.round(d / 4));
    for (let k = 0; k < n; k++) {
      const t = k / n;
      out.push(`${(p[0] + (q[0] - p[0]) * t + rnd() * 2.4).toFixed(1)},${(p[1] + (q[1] - p[1]) * t + rnd() * 2.4).toFixed(1)}`);
    }
  });
  return out.join(" ");
})();

const MapCanvas = () => (
  <div className="w-[1417px] shrink-0 border border-[#a8a8a8] bg-white overflow-hidden">
    <svg width="1415" height="876" className="block">
      {reds.map(([x, y], i) => <circle key={i} cx={x} cy={y} r="4.600" fill="#b9414a" stroke="#2b2b2b" strokeWidth="1.300" />)}
      <polygon points={polyPts} fill="#e77348" stroke="#555" strokeWidth="0.8" />
      {purples.map(([x, y], i) => <circle key={i} cx={x} cy={y} r="4.400" fill="#9a85bf" stroke="#2f2b3f" strokeWidth="1.100" />)}
    </svg>
  </div>
);

const tools = ["插值", "矢量创建", "矢量叠加", "矢量分析", "矢量几何图形", "矢量属性表", "矢量通用", "矢量瓦片", "矢量选择", "数据库", "图表", "图层工具", "网孔", "网络分析", "文件工具", "栅格创建", "栅格地形分析", "栅格分析", "栅格工具", "制图", "GPS"];
const ToolRow = ({ icon, text }) => (
  <div className="h-[19px] flex items-center text-[12px] text-[#111]">
    <div className="w-[6px] shrink-0" />
    <Tri />
    <div className="w-[16px] shrink-0 ml-[11px] flex justify-center">{icon}</div>
    <span className="ml-[6px]">{text}</span>
  </div>
);

const ToolboxPanel = () => (
  <div className="flex-1 min-w-0 flex flex-col border-l-2 border-[#bdbdbd] pl-[5px] pr-[5px]">
    <div className="h-[17px] shrink-0 flex items-center justify-between pl-[3px] text-[12px] text-[#222]"><span>工具箱</span><DockBtns /></div>
    <div className="h-[32px] shrink-0 flex items-center pl-[3px]">
      <div className="w-[25px] flex justify-center"><Sv s={19}><path d="M8 1l2 2 3-1v3l3 1-2 3 2 3-3 1-1 3-3-1-2 2-2-2-3 1v-3l-3-1 2-3-2-3 3-1V2l3 1z" fill="#c02828" /><circle cx="19" cy="17" r="5" fill="#9aa" /><circle cx="11" cy="21" r="3.500" fill="#6b9bcf" /></Sv></div>
      <div className="w-[25px] flex justify-center"><Python s={19} /></div>
      <div className="w-[25px] flex justify-center"><Clock s={19} /></div>
      <div className="w-[25px] flex justify-center opacity-60"><Sv s={19}><Doc x={5} y={2} w={16} h={22} /><path d="M8 10h10M8 14h10M8 18h10" stroke="#999" /></Sv></div>
      <Sep w="w-[7px]" />
      <div className="w-[25px] flex justify-center"><Sv s={19}><rect x="3" y="3" width="17" height="17" rx="2" fill="#f3d94e" stroke="#b59a30" /><path d="M12 22l11-11 2 2-11 11-3 1z" fill="#999" stroke="#777" /></Sv></div>
      <Sep w="w-[7px]" />
      <div className="w-[25px] flex justify-center"><Sv s={19}><path d="M4 2c3-1 6 1 6 4l13 14-3 3L7 9C4 10 1 7 2 4l3 3 2-2z" fill="#d8c36a" stroke="#555" /></Sv></div>
    </div>
    <div className="h-[21px] shrink-0 border border-[#b8b8b8] rounded-[2px] bg-white flex items-center pl-[7px] text-[12px] text-[#777] gap-[7px]">
      <svg width="13" height="13" viewBox="0 0 13 13" fill="none"><circle cx="5" cy="5" r="4" stroke="#888" strokeWidth="1.200" /><path d="M8 8l4 4" stroke="#888" strokeWidth="1.500" /></svg>
      <span>搜索...</span>
    </div>
    <div className="flex-1 border border-[#b8b8b8] bg-white">
      <ToolRow icon={<Clock s={16} />} text="最近用过" />
      {tools.map((t) => <ToolRow key={t} icon={<Q />} text={t} />)}
      <ToolRow text="GDAL" icon={<svg width="17" height="17" viewBox="0 0 17 17"><circle cx="9" cy="8" r="7" fill="#4aa0c8" /><path d="M2 1l8 5" stroke="#333" /><text x="8.500" y="15" fontSize="6.500" fontWeight="700" textAnchor="middle" fill="#111" fontFamily="Liberation Sans">GDAL</text></svg>} />
      <ToolRow text="GRASS" icon={<svg width="16" height="16" viewBox="0 0 16 16"><path d="M8 1l6 6-6 8-6-8z" fill="#eee" stroke="#888" /><path d="M8 14V6M8 13L4.500 7M8 13l3.500-6" stroke="#4a9a3a" strokeWidth="1.300" /></svg>} />
      <ToolRow text="SAGA" icon={<svg width="16" height="16" viewBox="0 0 16 16" fill="none"><circle cx="8" cy="8" r="6.500" stroke="#1f66a8" strokeWidth="2" /><path d="M3 6l10 2M4 11l9-7M6 13l7-3" stroke="#1f66a8" strokeWidth="1.600" /></svg>} />
    </div>
  </div>
);

const Spin = ({ w, text }) => (
  <div className={`${w} shrink-0 h-[21px] border border-[#b8b8b8] rounded-[2px] bg-white flex items-center`}>
    <span className="flex-1 pl-[4px] font-['Liberation_Mono'] text-[10px] text-[#333]">{text}</span>
    <div className="w-[13px] h-full border-l border-[#ddd] bg-[#f4f4f4] flex flex-col items-center justify-center gap-[2px]">
      <div className="w-0 h-0 border-x-[3px] border-x-transparent border-b-[4px] border-b-[#555]" />
      <div className="w-0 h-0 border-x-[3px] border-x-transparent border-t-[4px] border-t-[#555]" />
    </div>
  </div>
);

const StatusBar = () => (
  <div className="h-[31px] shrink-0 flex items-center border-b border-[#a0a0a0] relative text-[11px] text-[#333]">
    <div className="ml-[8px] w-[265px] h-[22px] shrink-0 border border-[#b8b8b8] rounded-[3px] bg-white flex items-center pl-[8px] gap-[6px] text-[12px] text-[#888]">
      <svg width="13" height="13" viewBox="0 0 13 13" fill="none"><circle cx="5" cy="5" r="4" stroke="#888" strokeWidth="1.200" /><path d="M8 8l4 4" stroke="#888" strokeWidth="1.500" /></svg>
      <span className="whitespace-nowrap">请输入关键字查找 <span className="font-['Liberation_Mono'] text-[11px]">(Ctrl+K)</span></span>
    </div>
    <span className="ml-[8px] font-['Liberation_Mono'] text-[10px] text-[#223] w-[882px] shrink-0">Updated local data sources</span>
    <span className="w-[26px] shrink-0 text-[10px]">坐标</span>
    <div className="w-[98px] h-[21px] shrink-0 border border-[#b8b8b8] rounded-[2px] bg-white flex items-center pl-[6px] font-['Liberation_Mono'] text-[10px]">109.871,29.756</div>
    <div className="w-[24px] shrink-0 flex justify-center">
      <svg width="16" height="18" viewBox="0 0 16 18" fill="none"><circle cx="5" cy="4" r="3" stroke="#333" strokeWidth="1.500" /><circle cx="10" cy="13" r="4" stroke="#333" strokeWidth="1.500" /><path d="M2 2l11 14M13 1L8 9" stroke="#333" strokeWidth="1.500" /></svg>
    </div>
    <span className="ml-[10px] w-[24px] shrink-0 text-[10px]">比例</span>
    <div className="w-[83px] h-[21px] shrink-0 border border-[#b8b8b8] rounded-[2px] bg-white flex items-center">
      <span className="flex-1 pl-[3px] font-['Liberation_Mono'] text-[10px]">1:1758648</span>
      <div className="w-[19px] h-full border-l border-[#ccc] bg-[#f2f2f2] flex items-center justify-center"><div className="w-0 h-0 border-x-[4px] border-x-transparent border-t-[4px] border-t-[#555]" /></div>
    </div>
    <div className="w-[34px] shrink-0 flex justify-center">
      <svg width="13" height="18" viewBox="0 0 13 18" fill="none"><path d="M3 8V5a3.500 3.500 0 0 1 7 0v3" stroke="#666" strokeWidth="1.600" /><rect x="1" y="8" width="11" height="9" rx="1.500" fill="#666" /></svg>
    </div>
    <span className="w-[36px] shrink-0 text-[10px]">放大镜</span>
    <Spin w="w-[88px]" text="100%" />
    <span className="ml-[10px] w-[53px] shrink-0 text-[10px]">旋转角度</span>
    <Spin w="w-[88px]" text="0.0°" />
    <div className="ml-[7px] shrink-0"><Check /></div>
    <span className="ml-[6px] w-[55px] shrink-0 text-[10px]">渲染</span>
    <span className="font-['Liberation_Mono'] text-[10px] whitespace-nowrap">EPSG:4490</span>
    <div className="absolute right-[11px] top-[9px] w-[14px] h-[14px] rounded-full bg-[#666] border-[3px] border-[#555]" />
    <span className="absolute left-[1776px] top-[5px] text-[15px] leading-[20px] text-[#9a9a9a]/60 whitespace-nowrap font-['Liberation_Sans','Noto_Sans_CJK_SC',sans-serif]">CSDN @刘一哥GIS</span>
  </div>
);

const Sogou = () => (
  <div className="absolute left-[1650px] top-[711px] w-[201px] h-[24px] bg-white border border-[#b3cdea] rounded-[2px] flex items-center pl-[11px] text-[#0c6fd8]">
    <span className="w-[22px] text-[15px] font-bold leading-none">中</span>
    <div className="w-[24px] flex justify-center"><svg width="16" height="16" viewBox="0 0 16 16"><path d="M10 1c2 6-2 11-9 10 3 5 12 4 13-3 0-3-2-6-4-7z" fill="currentColor" /></svg></div>
    <div className="w-[24px] flex justify-center"><svg width="14" height="14" viewBox="0 0 14 14" fill="none"><circle cx="3" cy="5" r="1.500" stroke="currentColor" /><path d="M10 4c2 0 2 3-1 6" stroke="currentColor" strokeWidth="1.800" /></svg></div>
    <div className="w-[24px] flex justify-center"><svg width="14" height="17" viewBox="0 0 14 17" fill="none"><rect x="4" y="0" width="6" height="11" rx="3" fill="currentColor" /><path d="M1 7c0 7 12 7 12 0M7 13v3" stroke="currentColor" strokeWidth="1.500" /></svg></div>
    <div className="w-[25px] flex justify-center"><svg width="16" height="12" viewBox="0 0 16 12"><rect width="16" height="12" rx="2" fill="currentColor" /><path d="M2 3h12M2 6h12" stroke="#fff" strokeDasharray="1.500 1" /><path d="M4 9h8" stroke="#fff" /></svg></div>
    <div className="w-[26px] flex justify-center"><svg width="17" height="15" viewBox="0 0 17 15"><circle cx="6" cy="4" r="4" fill="currentColor" /><path d="M0 14c0-7 12-7 12 0z" fill="currentColor" /><rect x="8" y="8" width="9" height="7" fill="#fff" stroke="currentColor" /></svg></div>
    <div className="w-[24px] flex justify-center"><svg width="16" height="15" viewBox="0 0 16 15"><path d="M4 0l4 2 4-2 4 4-3 2v9H3V6L0 4z" fill="currentColor" /></svg></div>
    <div className="w-[24px] flex justify-center"><svg width="14" height="14" viewBox="0 0 14 14"><rect width="6" height="6" rx="1.500" fill="currentColor" /><rect x="8" width="6" height="6" rx="1.500" fill="currentColor" /><rect y="8" width="6" height="6" rx="1.500" fill="currentColor" /><rect x="8" y="8" width="6" height="6" rx="1.500" fill="currentColor" /></svg></div>
  </div>
);
const SogouLogo = () => (
  <div className="absolute left-[1625px] top-[706px]">
    <svg width="33" height="31" viewBox="0 0 33 31"><path d="M4 6L25 1c3-1 5 0 6 3l2 15c0 3-1 5-4 6L9 30c-3 1-5-1-6-4L1 10c0-2 1-3 3-4z" fill="#f0561e" /><path d="M26 8l-13 2c-4 1-4 6 0 6l7 0c4 1 3 6-1 7l-11 2" stroke="#fff" strokeWidth="4.500" fill="none" /></svg>
  </div>
);

export default function App() {
  return (
    <div className="w-[1927px] h-[1039px] relative overflow-hidden bg-[#f0f0f0] pt-[3px] flex flex-col font-['Noto_Sans_CJK_SC','Liberation_Sans',sans-serif]">
      <div className="h-[23px] shrink-0 bg-white flex items-center pl-[5px] text-[12.5px] text-[#222]">
        <Q s={16} />
        <span className="ml-[5px] whitespace-nowrap">*未命名的工程 — QGIS</span>
        <div className="ml-auto flex items-center text-[#222]">
          <div className="w-[46px] flex justify-center"><svg width="11" height="11" viewBox="0 0 11 11"><path d="M0 6h10" stroke="#222" /></svg></div>
          <div className="w-[46px] flex justify-center"><svg width="11" height="11" viewBox="0 0 11 11" fill="none"><rect x=".5" y="2.500" width="7" height="8" stroke="#222" /><path d="M2.500 2.500v-2h7v8h-2" stroke="#222" /></svg></div>
          <div className="w-[46px] flex justify-center mr-[5px]"><svg width="11" height="11" viewBox="0 0 11 11"><path d="M.5.5l10 10M10.500.5l-10 10" stroke="#222" /></svg></div>
        </div>
      </div>
      <div className="h-[21px] shrink-0 bg-[#efefef] flex items-center gap-[14.2px] pl-[13px] text-[12px] text-[#222] border-b border-[#cfcfcf] box-content">
        {menus.map(([t, k]) => <span key={t} className="whitespace-nowrap">{t}(<span className="underline">{k}</span>)</span>)}
      </div>
      <TB1 />
      <TB2 />
      <div className="h-[878px] shrink-0 flex">
        <div className="w-[261px] ml-[3px] mr-[7px] shrink-0 flex flex-col relative">
          <BrowserPanel />
          <LayersPanel />
        </div>
        <MapCanvas />
        <ToolboxPanel />
      </div>
      <StatusBar />
      <SogouLogo />
      <Sogou />
      <div className="absolute left-[1470px] top-[923px] h-[60px] flex items-center whitespace-nowrap text-[#3535ff] font-bold leading-none">
        <span className="w-[93px] text-[72px] font-normal italic font-['Liberation_Serif',serif]">@</span>
        <span className="w-[69px] text-[48px]">刘</span>
        <span className="w-[71px] text-[58px]">一</span>
        <span className="w-[67px] text-[56px]">哥</span>
        <span className="text-[59px] font-bold tracking-[3px] font-['Liberation_Serif',serif]">GIS</span>
      </div>
    </div>
  );
}
